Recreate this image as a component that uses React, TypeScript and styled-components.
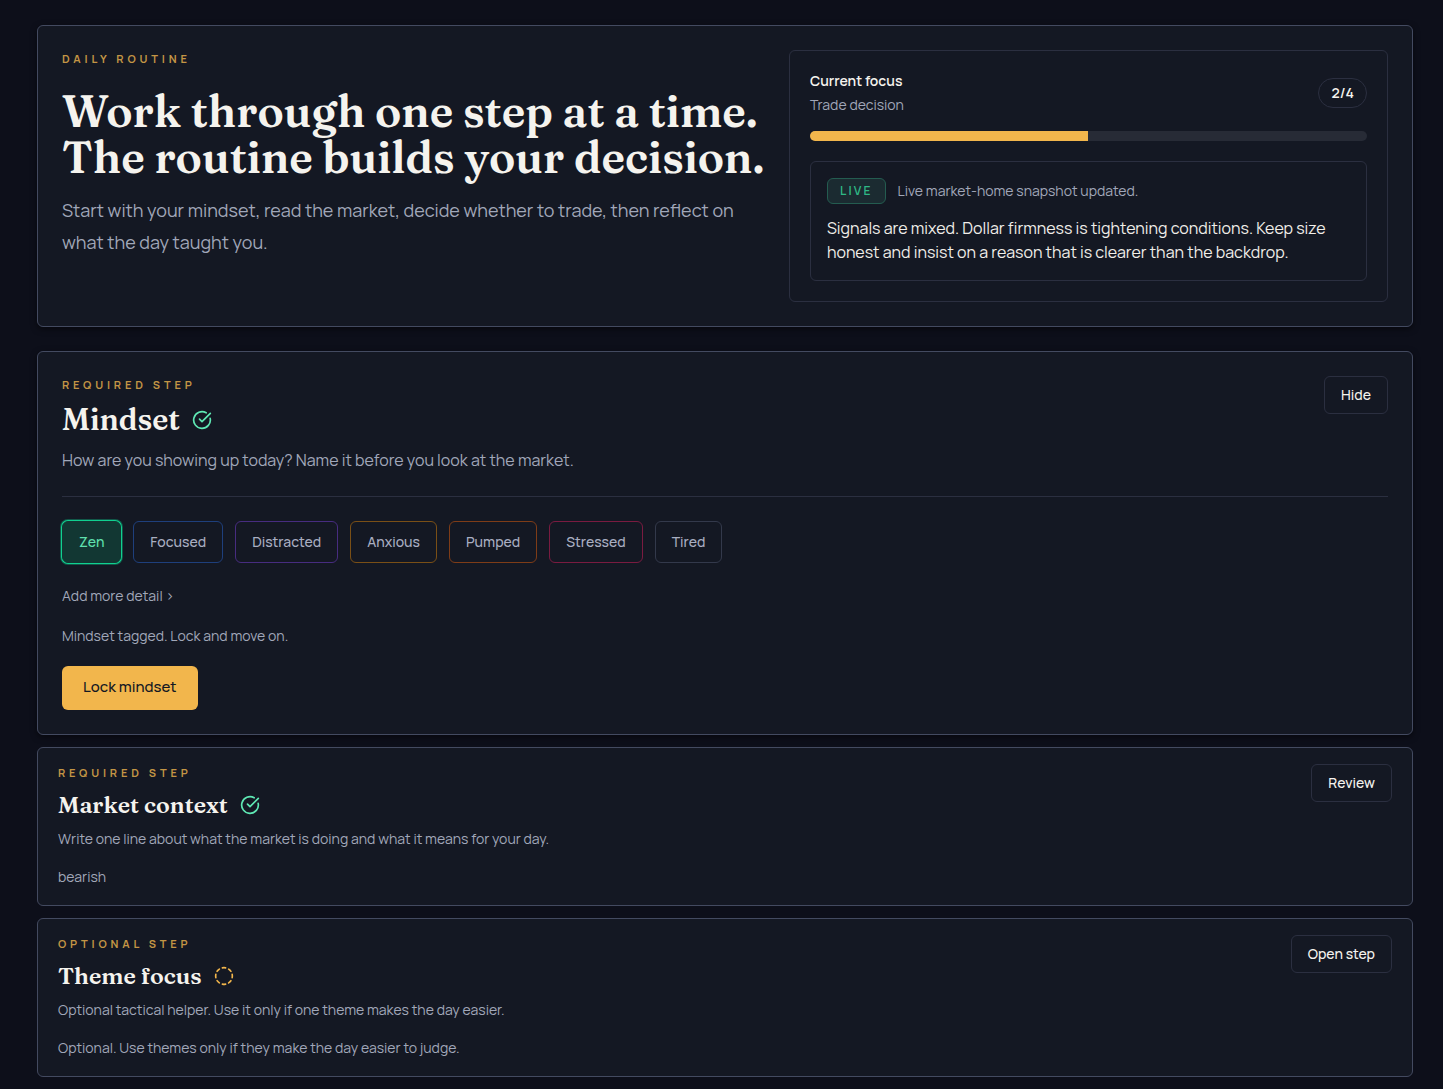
import React from "react";
import styled, { createGlobalStyle, css } from "styled-components";
import { CircleCheckBig, CircleDashed } from "lucide-react";

const sans = `Manrope, Inter, "Liberation Sans", sans-serif`;
const serif = `Fraunces, "Liberation Serif", serif`;

const GlobalStyle = createGlobalStyle`
  *, *::before, *::after { box-sizing: border-box; }
  body {
    margin: 0;
    background: #0d0f1a;
    color: #f5f3ee;
    font-family: ${sans};
    font-size: 14px;
    line-height: 24px;
  }
  h1, h2, p { margin: 0; }
  button { font-family: inherit; cursor: pointer; }
`;

const Page = styled.main`
  display: flex;
  flex-direction: column;
  gap: 12px;
  padding: 25px 30px 12px 37px;
`;

const Card = styled.section<{ $compact?: boolean }>`
  border: 1px solid #434a60;
  border-radius: 6px;
  background: #141823;
  padding: ${(p) => (p.$compact ? "16px 20px" : "24px")};
  box-shadow: ${(p) => (p.$compact ? "none" : "0 2px 6px rgba(0, 0, 0, 0.5)")};
`;

const Hero = styled(Card)`
  display: grid;
  grid-template-columns: minmax(0, 1.16fr) minmax(0, 1fr);
  gap: 32px;
  margin-bottom: 12px;
`;

const Eyebrow = styled.p`
  color: #c39545;
  font-size: 11px;
  font-weight: 700;
  line-height: 18px;
  letter-spacing: 0.35em;
  text-transform: uppercase;
`;

const Headline = styled.h1`
  margin: 20px 0 14px;
  font-family: ${serif};
  font-size: 44px;
  font-weight: 600;
  line-height: 46px;
  white-space: nowrap;
`;

const Intro = styled.p`
  max-width: 690px;
  color: #a1a7b9;
  font-size: 18px;
  line-height: 32px;
`;

const Focus = styled.aside`
  border: 1px solid #2b2f40;
  border-radius: 6px;
  padding: 20px;
`;

const FocusHead = styled.div`
  display: flex;
  align-items: center;
  justify-content: space-between;
`;

const FocusLabels = styled.div`
  display: grid;
  gap: 4px;
  line-height: 20px;
`;

const FocusTitle = styled.p`
  font-weight: 600;
`;

const Muted = styled.p`
  color: #a1a7b9;
`;

const Count = styled.span`
  border: 1px solid #2b2f40;
  border-radius: 15px;
  padding: 0 12px;
  font-weight: 600;
  line-height: 28px;
`;

const Track = styled.div`
  height: 10px;
  margin: 16px 0 20px;
  border-radius: 5px;
  background: #272b36;
  overflow: hidden;
`;

const Fill = styled.div`
  height: 100%;
  background: #f2b64c;
`;

const Snapshot = styled.div`
  border: 1px solid #2b2f40;
  border-radius: 6px;
  padding: 16px;
`;

const SnapshotHead = styled.div`
  display: flex;
  align-items: center;
  gap: 12px;
  margin-bottom: 12px;
`;

const Live = styled.span`
  border: 1px solid #245c50;
  border-radius: 6px;
  padding: 0 12px;
  background: #1b2b31;
  color: #2fb886;
  font-size: 12px;
  font-weight: 600;
  line-height: 24px;
  letter-spacing: 0.18em;
`;

const Reading = styled.p`
  color: #f0eee9;
  font-size: 16px;
  font-weight: 400;
`;

const StepHead = styled.header<{ $divided?: boolean }>`
  display: flex;
  align-items: flex-start;
  justify-content: space-between;
  ${(p) =>
    p.$divided &&
    css`
      padding-bottom: 24px;
      border-bottom: 1px solid #2b2f40;
      margin-bottom: 24px;
    `}
`;

const TitleRow = styled.div<{ $large?: boolean }>`
  display: flex;
  align-items: center;
  gap: 12px;
  margin: ${(p) => (p.$large ? "6px 0 8px" : "7px 0 6px")};
`;

const StepTitle = styled.h2<{ $large?: boolean }>`
  font-family: ${serif};
  font-size: ${(p) => (p.$large ? "30px" : "23px")};
  font-weight: 600;
  line-height: ${(p) => (p.$large ? "40px" : "32px")};
`;

const Lead = styled.p`
  color: #a1a7b9;
  font-size: 16px;
  line-height: 24px;
`;

const Note = styled(Muted)`
  margin-top: 14px;
`;

const GhostButton = styled.button`
  border: 1px solid #2b2f40;
  border-radius: 6px;
  padding: 0 16px;
  background: transparent;
  color: #f5f3ee;
  font-size: 14px;
  font-weight: 500;
  line-height: 36px;
`;

const Moods = styled.div`
  display: flex;
  flex-wrap: wrap;
  gap: 12px;
`;

const Mood = styled.button<{ $edge: string; $active?: boolean }>`
  border: 1px solid ${(p) => p.$edge};
  border-radius: 6px;
  padding: 0 16px;
  background: transparent;
  color: #a9aec1;
  font-size: 14px;
  font-weight: 500;
  line-height: 40px;
  ${(p) =>
    p.$active &&
    css`
      border-color: #123733;
      background: #123733;
      color: #5fe0ae;
      box-shadow: 0 0 0 1px ${p.$edge}, 0 0 0 2px rgba(15, 184, 131, 0.4);
    `}
`;

const DetailButton = styled.button`
  display: block;
  border: 0;
  margin: 21px 0 16px;
  padding: 0;
  background: transparent;
  color: #a1a7b9;
  font-size: 14px;
  line-height: 24px;
`;

const LockButton = styled.button`
  border: 0;
  border-radius: 6px;
  margin-top: 18px;
  padding: 0 21px 2px;
  background: #f2b64c;
  color: #141823;
  font-size: 15px;
  font-weight: 500;
  line-height: 42px;
  vertical-align: top;
`;

const moods = [
  { label: "Zen", edge: "#10d090" },
  { label: "Focused", edge: "#1e3f7c" },
  { label: "Distracted", edge: "#472c80" },
  { label: "Anxious", edge: "#7a4f16" },
  { label: "Pumped", edge: "#7e3c17" },
  { label: "Stressed", edge: "#7a1b40" },
  { label: "Tired", edge: "#33394b" },
];

const steps = [
  {
    kind: "Required step",
    title: "Market context",
    text: "Write one line about what the market is doing and what it means for your day.",
    note: "bearish",
    action: "Review",
    done: true,
  },
  {
    kind: "Optional step",
    title: "Theme focus",
    text: "Optional tactical helper. Use it only if one theme makes the day easier.",
    note: "Optional. Use themes only if they make the day easier to judge.",
    action: "Open step",
    done: false,
  },
];

const StatusIcon = ({ done }: { done: boolean }) =>
  done ? <CircleCheckBig size={20} color="#5fe8b4" /> : <CircleDashed size={20} color="#f2b64c" />;

export default function App() {
  const done = 2;
  const total = 4;
  return (
    <>
      <GlobalStyle />
      <Page>
        <Hero>
          <div>
            <Eyebrow>Daily routine</Eyebrow>
            <Headline>
              Work through one step at a time.
              <br />
              The routine builds your decision.
            </Headline>
            <Intro>
              Start with your mindset, read the market, decide whether to trade, then reflect on what the day taught
              you.
            </Intro>
          </div>
          <Focus>
            <FocusHead>
              <FocusLabels>
                <FocusTitle>Current focus</FocusTitle>
                <Muted>Trade decision</Muted>
              </FocusLabels>
              <Count>
                {done}/{total}
              </Count>
            </FocusHead>
            <Track>
              <Fill style={{ width: `${(done / total) * 100}%` }} />
            </Track>
            <Snapshot>
              <SnapshotHead>
                <Live>LIVE</Live>
                <Muted>Live market-home snapshot updated.</Muted>
              </SnapshotHead>
              <Reading>
                Signals are mixed. Dollar firmness is tightening conditions. Keep size honest and insist on a reason
                that is clearer than the backdrop.
              </Reading>
            </Snapshot>
          </Focus>
        </Hero>

        <Card>
          <StepHead $divided>
            <div>
              <Eyebrow>Required step</Eyebrow>
              <TitleRow $large>
                <StepTitle $large>Mindset</StepTitle>
                <StatusIcon done />
              </TitleRow>
              <Lead>How are you showing up today? Name it before you look at the market.</Lead>
            </div>
            <GhostButton type="button">Hide</GhostButton>
          </StepHead>
          <Moods>
            {moods.map((m, i) => (
              <Mood key={m.label} type="button" $edge={m.edge} $active={i === 0} aria-pressed={i === 0}>
                {m.label}
              </Mood>
            ))}
          </Moods>
          <DetailButton type="button">Add more detail ›</DetailButton>
          <Muted>Mindset tagged. Lock and move on.</Muted>
          <LockButton type="button">Lock mindset</LockButton>
        </Card>

        {steps.map((s) => (
          <Card $compact key={s.title}>
            <StepHead>
              <div>
                <Eyebrow>{s.kind}</Eyebrow>
                <TitleRow>
                  <StepTitle>{s.title}</StepTitle>
                  <StatusIcon done={s.done} />
                </TitleRow>
                <Muted>{s.text}</Muted>
                <Note>{s.note}</Note>
              </div>
              <GhostButton type="button">{s.action}</GhostButton>
            </StepHead>
          </Card>
        ))}
      </Page>
    </>
  );
}
